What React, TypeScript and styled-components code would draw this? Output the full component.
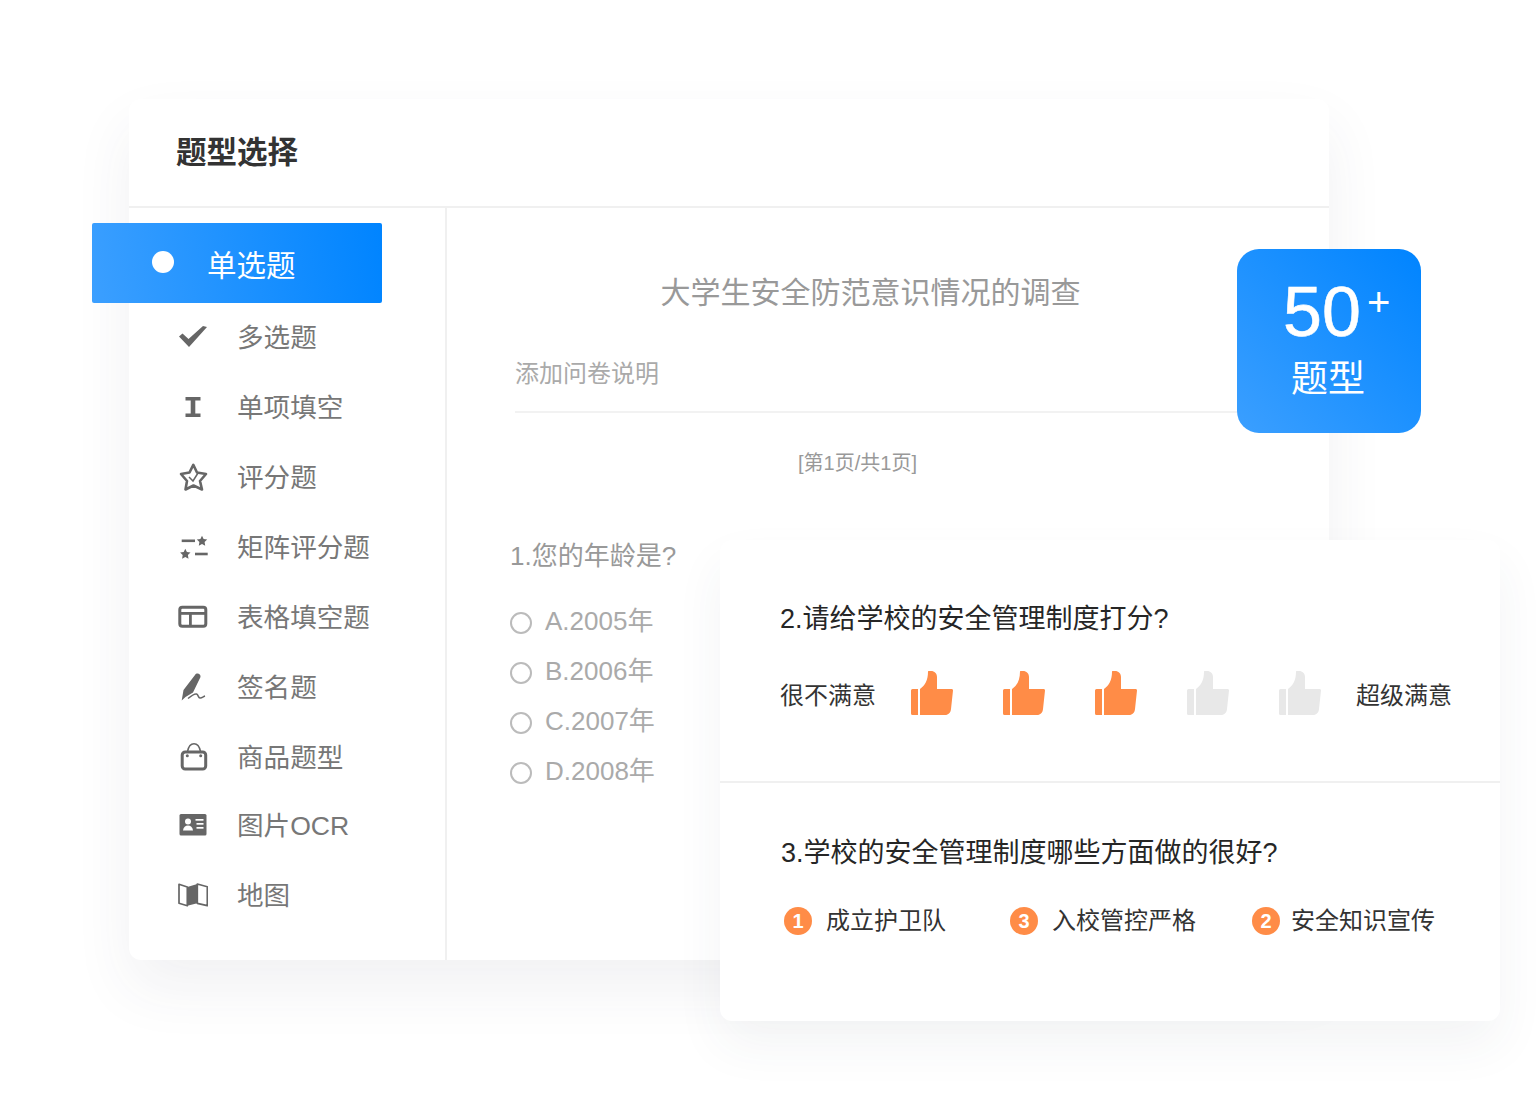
import React from 'react';
import styled, {createGlobalStyle} from 'styled-components';

const GlobalStyle = createGlobalStyle`
  html, body {
    margin: 0;
    padding: 0;
    background: #fff;
    font-family: "Liberation Sans", "Noto Sans CJK SC", sans-serif;
  }
  * {
    box-sizing: border-box;
  }
`;

const typeIcons: Record<string, React.ReactNode> = {
  check: <path d="M1 14.500l3.500-3 6 5.500L25 4l4 1-18 20z" fill="#666"/>,
  text: <path d="M7.500 5h15v3.500h-5.200v13h5.200V25h-15v-3.500h5.200v-13H7.500z" fill="#666"/>,
  star: (
    <>
      <path d="M15.300 2.800L19 10.500l9 1.500-6 7 2 8.500-8.500-4-8 4L9 19l-6-7 8.500-1.500z" fill="none" stroke="#666" strokeWidth="2.600" strokeLinejoin="round"/>
      <path d="M11 15l4 4 5-8" fill="none" stroke="#666" strokeWidth="1.500"/>
    </>
  ),
  matrix: (
    <>
      <rect x="3.700" y="7.500" width="13.300" height="2.600" fill="#666"/>
      <rect x="17" y="20.700" width="12.700" height="2.600" fill="#666"/>
      <path d="M24 3.800l1.600 3.300 3.600.5-2.600 2.500.6 3.600-3.200-1.700-3.200 1.700.6-3.600-2.600-2.500 3.600-.5zM7.300 16.800l1.600 3.300 3.600.5-2.600 2.500.6 3.600-3.200-1.700-3.200 1.700.6-3.600-2.600-2.500 3.600-.5z" fill="#666"/>
    </>
  ),
  table: (
    <>
      <rect x="1.800" y="5.200" width="26" height="19" rx="2.500" fill="none" stroke="#666" strokeWidth="3"/>
      <rect x="2" y="10" width="26" height="2.800" fill="#666"/>
      <rect x="11" y="11" width="2.800" height="13" fill="#666"/>
    </>
  ),
  pen: (
    <>
      <path d="M17 3c1.500-2.500 6-1.500 5.500 2L15 20.500 7.500 25l-3.800 3.500L5.500 18z" fill="#666"/>
      <path d="M10 26.500c3-2.500 6.500-5 8.500-4.500 2 .6 1.500 3.800 3.500 4 1.700.2 3.500-1.500 5-2" fill="none" stroke="#666" strokeWidth="1.500"/>
    </>
  ),
  bag: (
    <>
      <rect x="4.200" y="10" width="23.500" height="17" rx="3" fill="none" stroke="#666" strokeWidth="3"/>
      <path d="M9.500 9.500C10.500 4.500 13 1.800 16 1.800s5.500 2.700 6.500 7.700" fill="none" stroke="#666" strokeWidth="1.500"/>
      <circle cx="9.300" cy="13.700" r="1.500" fill="#666"/>
      <circle cx="22.700" cy="13.700" r="1.500" fill="#666"/>
    </>
  ),
  card: (
    <>
      <rect x="1.500" y="4" width="27" height="21.500" rx="1.500" fill="#666"/>
      <circle cx="10" cy="11.500" r="3" fill="#fff"/>
      <path d="M5 20.500c.4-3.500 2.400-5 5-5s4.600 1.500 5 5z" fill="#fff"/>
      <rect x="17.500" y="9" width="8" height="1.700" fill="#fff"/>
      <rect x="18.500" y="13" width="7" height="1.700" fill="#fff"/>
      <rect x="18.500" y="17" width="7" height="1.700" fill="#fff"/>
    </>
  ),
  map: (
    <>
      <path d="M1 4.300L9.300 7v18.700L1 23.300zM19.300 4l10 2.700v19l-10-2.400z" fill="none" stroke="#666" strokeWidth="1.700" strokeLinejoin="round"/>
      <path d="M9.300 7l10-3v19.300l-10 2.400z" fill="#666"/>
    </>
  ),
};

const questionTypes = [
  {label: '多选题', icon: 'check', lift: 0},
  {label: '单项填空', icon: 'text', lift: 0},
  {label: '评分题', icon: 'star', lift: 0},
  {label: '矩阵评分题', icon: 'matrix', lift: 0},
  {label: '表格填空题', icon: 'table', lift: 0},
  {label: '签名题', icon: 'pen', lift: 0},
  {label: '商品题型', icon: 'bag', lift: 0},
  {label: '图片OCR', icon: 'card', lift: 2},
  {label: '地图', icon: 'map', lift: 0},
];

const options = ['A.2005年', 'B.2006年', 'C.2007年', 'D.2008年'];
const thumbs = [true, true, true, false, false];
const ranks = [
  {rank: 1, label: '成立护卫队', width: 226, gap: 14},
  {rank: 3, label: '入校管控严格', width: 242, gap: 14},
  {rank: 2, label: '安全知识宣传', width: 190, gap: 11},
];

export default function App() {
  return (
    <Stage>
      <GlobalStyle/>
      <MainCard>
        <CardHeader>题型选择</CardHeader>
        <CardBody>
          <Sidebar>
            <ActiveType>
              <ActiveDot/>
              单选题
            </ActiveType>
            {questionTypes.map(({label, icon, lift}) => (
              <TypeRow key={label} $lift={lift}>
                <TypeIcon viewBox="0 0 30 30">{typeIcons[icon]}</TypeIcon>
                {label}
              </TypeRow>
            ))}
          </Sidebar>
          <Survey>
            <SurveyTitle>大学生安全防范意识情况的调查</SurveyTitle>
            <SurveyNote>添加问卷说明</SurveyNote>
            <Pager>[第1页/共1页]</Pager>
            <Question>1.您的年龄是?</Question>
            <OptionList>
              {options.map((option) => (
                <OptionRow key={option}>
                  <Radio/>
                  {option}
                </OptionRow>
              ))}
            </OptionList>
          </Survey>
        </CardBody>
      </MainCard>

      <CountBadge>
        <CountLine>50<Plus>+</Plus></CountLine>
        <CountLabel>题型</CountLabel>
      </CountBadge>

      <FloatCard>
        <RatingSection>
          <FloatTitle>2.请给学校的安全管理制度打分?</FloatTitle>
          <RatingRow>
            <RatingLabel>很不满意</RatingLabel>
            <Thumbs>
              {thumbs.map((on, i) => <Thumb key={i} color={on ? '#ff8c47' : '#e8e8e8'}/>)}
            </Thumbs>
            <RatingLabel>超级满意</RatingLabel>
          </RatingRow>
        </RatingSection>
        <RankSection>
          <FloatTitle>3.学校的安全管理制度哪些方面做的很好?</FloatTitle>
          <RankRow>
            {ranks.map(({rank, label, width, gap}) => (
              <RankItem key={label} $width={width} $gap={gap}>
                <RankDot>{rank}</RankDot>
                {label}
              </RankItem>
            ))}
          </RankRow>
        </RankSection>
      </FloatCard>
    </Stage>
  );
}

function Thumb({color}: {color: string}) {
  return (
    <ThumbSvg viewBox="0 0 42 44">
      <path d="M1.500 18H7v26H1.500A1.500 1.500 0 0 1 0 42.500v-23A1.500 1.500 0 0 1 1.500 18z" fill={color}/>
      <path d="M9 18c5-3.500 8-8.500 8-17.500 0-.3.200-.5.500-.5H20c3.500 0 6 2.500 6 6v12h14.500c1 0 1.500.6 1.500 1.500L40 38c-.3 3.500-2.500 6-6 6H9z" fill={color}/>
    </ThumbSvg>
  );
}

const Stage = styled.div`
  position: relative;
  width: 1540px;
  height: 1120px;
  padding: 99px 0 0 129px;
  overflow: hidden;
  background: #fff;
`;

const MainCard = styled.div`
  width: 1200px;
  height: 861px;
  border-radius: 12px;
  background: #fff;
  box-shadow: 0 28px 60px rgba(50, 60, 90, 0.07);
`;

const CardHeader = styled.div`
  height: 109px;
  padding: 33px 0 0 47px;
  border-bottom: 2px solid #f0f0f0;
  font-size: 30.5px;
  line-height: 40px;
  font-weight: 700;
  color: #333;
`;

const CardBody = styled.div`
  display: flex;
  height: 752px;
`;

const Sidebar = styled.div`
  width: 318px;
  padding: 15px 0 0 44px;
  border-right: 2px solid #f0f0f0;
`;

const ActiveType = styled.div`
  display: flex;
  align-items: center;
  gap: 33px;
  width: 290px;
  height: 80px;
  margin: 0 0 -3px -81px;
  padding-left: 60px;
  position: relative;
  border-radius: 2px;
  background: linear-gradient(80deg, #3b9fff, #0084ff);
  color: #fff;
  font-size: 29.5px;
`;

const ActiveDot = styled.span`
  width: 22px;
  height: 22px;
  margin-top: -2px;
  border-radius: 50%;
  background: #fff;
`;

const TypeRow = styled.div<{$lift: number}>`
  display: flex;
  align-items: center;
  gap: 24px;
  height: 70px;
  margin-top: ${props => -props.$lift}px;
  font-size: 26.6px;
  color: #777;
`;

const TypeIcon = styled.svg`
  width: 30px;
  height: 30px;
  margin: 3px 5px 0;
`;

const Survey = styled.div`
  flex: 1;
  padding: 65px 105px 0 68px;
`;

const SurveyTitle = styled.div`
  padding-left: 2px;
  font-size: 30px;
  line-height: 40px;
  text-align: center;
  color: #999;
`;

const SurveyNote = styled.div`
  margin: 44px -40px 0 0;
  padding-bottom: 20px;
  border-bottom: 2px solid #f2f2f2;
  font-size: 24px;
  line-height: 34px;
  color: #aaa;
`;

const Pager = styled.div`
  margin-top: 36px;
  padding-right: 24px;
  font-size: 20px;
  line-height: 28px;
  text-align: center;
  color: #999;
`;

const Question = styled.div`
  margin: 61px 0 0 -5px;
  font-size: 26px;
  line-height: 36px;
  color: #999;
`;

const OptionList = styled.div`
  display: flex;
  flex-direction: column;
  gap: 14px;
  margin: 29px 0 0 -5px;
`;

const OptionRow = styled.div`
  display: flex;
  align-items: center;
  gap: 13px;
  font-size: 26px;
  line-height: 36px;
  color: #aaa;
`;

const Radio = styled.span`
  width: 22px;
  height: 22px;
  margin-top: 3px;
  border: 2px solid #bbb;
  border-radius: 50%;
`;

const CountBadge = styled.div`
  position: absolute;
  left: 1237px;
  top: 249px;
  display: flex;
  flex-direction: column;
  align-items: center;
  width: 184px;
  height: 184px;
  padding-top: 24px;
  border-radius: 22px;
  background: linear-gradient(45deg, #3b9fff, #0084ff);
  color: #fff;
`;

const CountLine = styled.div`
  position: relative;
  margin-right: 14px;
  font-size: 70px;
  line-height: 78px;
  -webkit-text-stroke: 0.6px #fff;
`;

const Plus = styled.span`
  position: absolute;
  left: 84px;
  top: -1px;
  font-size: 40px;
  line-height: 60px;
  -webkit-text-stroke: 0;
`;

const CountLabel = styled.div`
  margin: 4px 2px 0 0;
  font-size: 37px;
  line-height: 50px;
`;

const FloatCard = styled.div`
  position: absolute;
  left: 720px;
  top: 540px;
  width: 780px;
  height: 481px;
  border-radius: 12px;
  background: #fff;
  box-shadow: 0 24px 50px rgba(50, 60, 90, 0.06);
`;

const RatingSection = styled.div`
  height: 243px;
  padding: 60px 48px 0 60px;
  border-bottom: 2px solid #f0f0f0;
`;

const RankSection = styled.div`
  padding: 51px 0 0 61px;
`;

const FloatTitle = styled.div`
  font-size: 27px;
  line-height: 38px;
  color: #262626;
`;

const RatingRow = styled.div`
  display: flex;
  align-items: center;
  justify-content: space-between;
  margin-top: 33px;
`;

const RatingLabel = styled.span`
  font-size: 24px;
  color: #333;
`;

const Thumbs = styled.div`
  display: flex;
  gap: 50px;
`;

const ThumbSvg = styled.svg`
  width: 42px;
  height: 44px;
`;

const RankRow = styled.div`
  display: flex;
  margin-top: 32px;
  padding-left: 3px;
`;

const RankItem = styled.div<{$width: number; $gap: number}>`
  display: flex;
  align-items: center;
  gap: ${props => props.$gap}px;
  width: ${props => props.$width}px;
  font-size: 24px;
  line-height: 34px;
  color: #333;
`;

const RankDot = styled.span`
  display: flex;
  align-items: center;
  justify-content: center;
  width: 28px;
  height: 28px;
  border-radius: 50%;
  background: #ff8c47;
  color: #fff;
  font-size: 20px;
  font-weight: 700;
`;
